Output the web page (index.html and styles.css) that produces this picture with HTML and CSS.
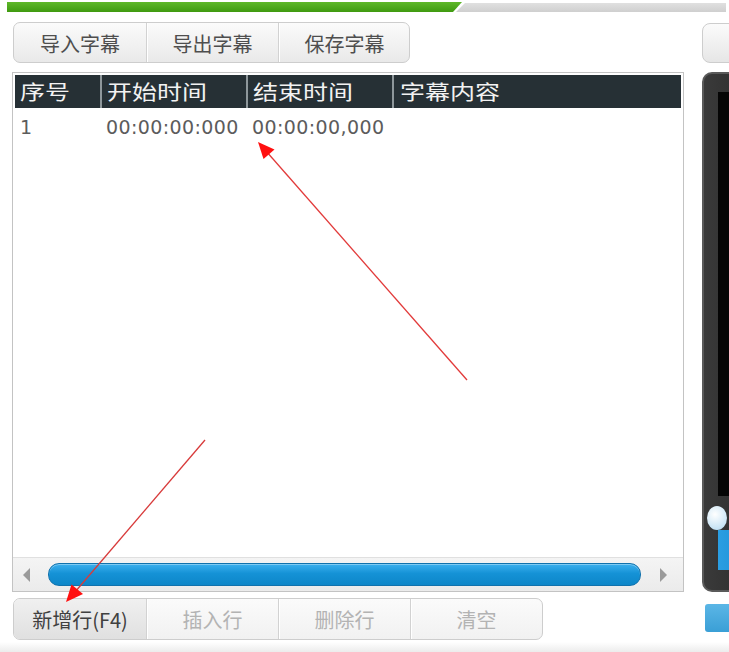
FILE: index.html
```html
<!DOCTYPE html>
<html lang="zh">
<head>
<meta charset="utf-8">
<title>字幕编辑</title>
<link rel="stylesheet" href="styles.css">
</head>
<body>
<div class="page">
  <div class="topbar">
    <div class="tab-green"></div>
    <div class="tab-gray"></div>
  </div>
  <div class="main">
    <div class="left">
      <div class="btngroup top-group">
        <div class="btn">导入字幕</div>
        <div class="btn">导出字幕</div>
        <div class="btn">保存字幕</div>
      </div>
      <div class="table">
        <div class="thead">
          <div class="th c1"><span class="wide">序号</span></div>
          <div class="th c2"><span class="wide">开始时间</span></div>
          <div class="th c3"><span class="wide">结束时间</span></div>
          <div class="th c4"><span class="wide">字幕内容</span></div>
        </div>
        <div class="tbody">
          <div class="row">
            <div class="td c1">1</div>
            <div class="td c2">00:00:00:000</div>
            <div class="td c3">00:00:00,000</div>
            <div class="td c4"></div>
          </div>
        </div>
        <div class="hscroll">
          <div class="arrow-left"></div>
          <div class="thumb"></div>
          <div class="arrow-right"></div>
        </div>
      </div>
      <div class="btngroup bottom-group">
        <div class="btn active">新增行(F4)</div>
        <div class="btn disabled">插入行</div>
        <div class="btn disabled">删除行</div>
        <div class="btn disabled">清空</div>
      </div>
    </div>
    <div class="right">
      <div class="rbtn"></div>
      <div class="player">
        <div class="screen"></div>
        <div class="knob"></div>
        <div class="vbar"></div>
      </div>
      <div class="rsquare"></div>
    </div>
  </div>
  <div class="footer-strip"></div>
  <svg class="annot" width="729" height="652" viewBox="0 0 729 652">
    <line x1="467" y1="380" x2="266" y2="151" stroke="#e23a3a" stroke-width="1.3"/>
    <polygon points="258,142 263.5,159 274.5,149.5" fill="#ff1010"/>
    <line x1="205" y1="440" x2="75" y2="592" stroke="#d83a3a" stroke-width="1.3"/>
    <polygon points="66,602 71.5,584.5 83,594" fill="#ff1010"/>
  </svg>
</div>
</body>
</html>
```

FILE: styles.css
```css
html, body {
  margin: 0;
  padding: 0;
  background: #ffffff;
}

.page {
  position: relative;
  width: 729px;
  height: 652px;
  overflow: hidden;
  font-family: "Noto Sans CJK SC", "DejaVu Sans", sans-serif;
}

.topbar {
  display: flex;
  padding-top: 2px;
  padding-left: 7px;
  height: 10px;
}

.tab-green {
  width: 455px;
  height: 10px;
  background: linear-gradient(#5fb82a, #3f9a10);
  clip-path: polygon(0 0, 100% 0, calc(100% - 9px) 100%, 0 100%);
}

.tab-gray {
  width: 270px;
  height: 9px;
  margin-top: 1px;
  margin-left: -6px;
  background: linear-gradient(#e0e0e0, #cfcfcf);
  clip-path: polygon(9px 0, 100% 0, 100% 100%, 0 100%);
}

.main {
  display: grid;
  grid-template-columns: 672px 60px;
  column-gap: 18px;
  padding-left: 12px;
  margin-top: 10px;
}

.left {
  display: flex;
  flex-direction: column;
}

.btngroup {
  display: flex;
  border: 1px solid #cdcdcd;
  border-radius: 7px;
  background: linear-gradient(#fbfbfb, #e9e9e9);
  overflow: hidden;
  box-sizing: border-box;
}

.top-group {
  margin-left: 1px;
  width: 397px;
  height: 41px;
}

.btn {
  flex: 0 0 132px;
  display: flex;
  align-items: center;
  justify-content: center;
  font-size: 20px;
  color: #4e4e4e;
  border-left: 1px solid #d2d2d2;
  box-shadow: inset 1px 0 0 #ffffff;
  box-sizing: border-box;
  white-space: nowrap;
}

.btn:first-child {
  border-left: none;
  box-shadow: none;
}

.top-group .btn {
  padding-top: 1px;
}

.table {
  margin-top: 9px;
  height: 520px;
  border: 1px solid #c3c3c3;
  padding: 2px 2px 0 2px;
  box-sizing: border-box;
  display: flex;
  flex-direction: column;
  background: #ffffff;
}

.thead {
  display: flex;
  height: 33px;
  background: #263035;
  flex: 0 0 auto;
}

.th {
  color: #f2f2f2;
  font-size: 20px;
  line-height: 33px;
  padding-left: 5px;
  box-sizing: border-box;
  white-space: nowrap;
  overflow: hidden;
}

.wide {
  display: inline-block;
  transform: scaleX(1.25);
  transform-origin: left center;
}

.c1 { width: 85px; }
.c2 { width: 146px; }
.c3 { width: 146px; }
.c4 { flex: 1; }

.th.c2, .th.c3, .th.c4 {
  border-left: 2px solid #8e979b;
}

.th.c4 { padding-left: 6px; }

.tbody {
  flex: 1;
}

.row {
  display: flex;
  height: 40px;
}

.td {
  font-family: "DejaVu Sans", sans-serif;
  font-size: 19px;
  letter-spacing: 0.4px;
  color: #5c5c5c;
  padding-top: 8px;
  padding-left: 5px;
  box-sizing: border-box;
  white-space: nowrap;
}

.td.c2, .td.c3 { padding-left: 6px; }

.hscroll {
  flex: 0 0 33px;
  display: flex;
  align-items: center;
  background: linear-gradient(#f4f4f4, #ebebeb);
  border-top: 1px solid #e0e0e0;
  margin: 0 -2px;
  padding: 0 0 0 10px;
}

.arrow-left {
  width: 0;
  height: 0;
  border-top: 7px solid transparent;
  border-bottom: 7px solid transparent;
  border-right: 7px solid #9a9a9a;
}

.thumb {
  margin-left: 18px;
  width: 593px;
  height: 23px;
  box-sizing: border-box;
  border-radius: 11px;
  border: 1px solid #1172ad;
  background: linear-gradient(#3cb0ee, #1592d6 45%, #0d86c8);
  box-shadow: inset 0 1px 0 rgba(255,255,255,0.35);
}

.arrow-right {
  margin-left: 19px;
  width: 0;
  height: 0;
  border-top: 7px solid transparent;
  border-bottom: 7px solid transparent;
  border-left: 7px solid #9a9a9a;
}

.bottom-group {
  margin-top: 6px;
  margin-left: 1px;
  width: 530px;
  height: 42px;
  background: linear-gradient(#fbfbfb, #f1f1f1);
}

.bottom-group .btn {
  font-size: 20px;
}

.btn.active {
  background: linear-gradient(#f0f0f0, #e0e0e0);
  color: #404040;
}

.btn.disabled {
  color: #b3b3b3;
}

.right {
  display: flex;
  flex-direction: column;
}

.rbtn {
  margin-top: 1px;
  height: 40px;
  box-sizing: border-box;
  border: 1px solid #cdcdcd;
  border-radius: 8px;
  background: linear-gradient(#fbfbfb, #e6e6e6);
}

.player {
  position: relative;
  margin-top: 9px;
  height: 520px;
  box-sizing: border-box;
  border-radius: 10px;
  border: 2px solid #5a5a5a;
  background: linear-gradient(90deg, #3a3a3a, #2a2a2a);
}

.screen {
  position: absolute;
  left: 14px;
  top: 18px;
  right: 0;
  bottom: 94px;
  background: #050505;
}

.knob {
  position: absolute;
  left: 3px;
  top: 432px;
  width: 20px;
  height: 24px;
  border-radius: 50%;
  background: radial-gradient(circle at 40% 35%, #ffffff, #c9e4f5 70%, #a9d2ee);
}

.vbar {
  position: absolute;
  left: 14px;
  top: 456px;
  width: 40px;
  height: 40px;
  background: linear-gradient(90deg, #2a9ee2, #1a8bd0);
}

.rsquare {
  margin-top: 12px;
  margin-left: 3px;
  width: 40px;
  height: 28px;
  border-radius: 3px;
  background: linear-gradient(#5bb6e6, #3a9fd6);
}

.footer-strip {
  position: absolute;
  left: 0;
  right: 0;
  bottom: 0;
  height: 10px;
  background: linear-gradient(#ffffff, #ececec);
}

.annot {
  position: absolute;
  left: 0;
  top: 0;
  pointer-events: none;
}
```
